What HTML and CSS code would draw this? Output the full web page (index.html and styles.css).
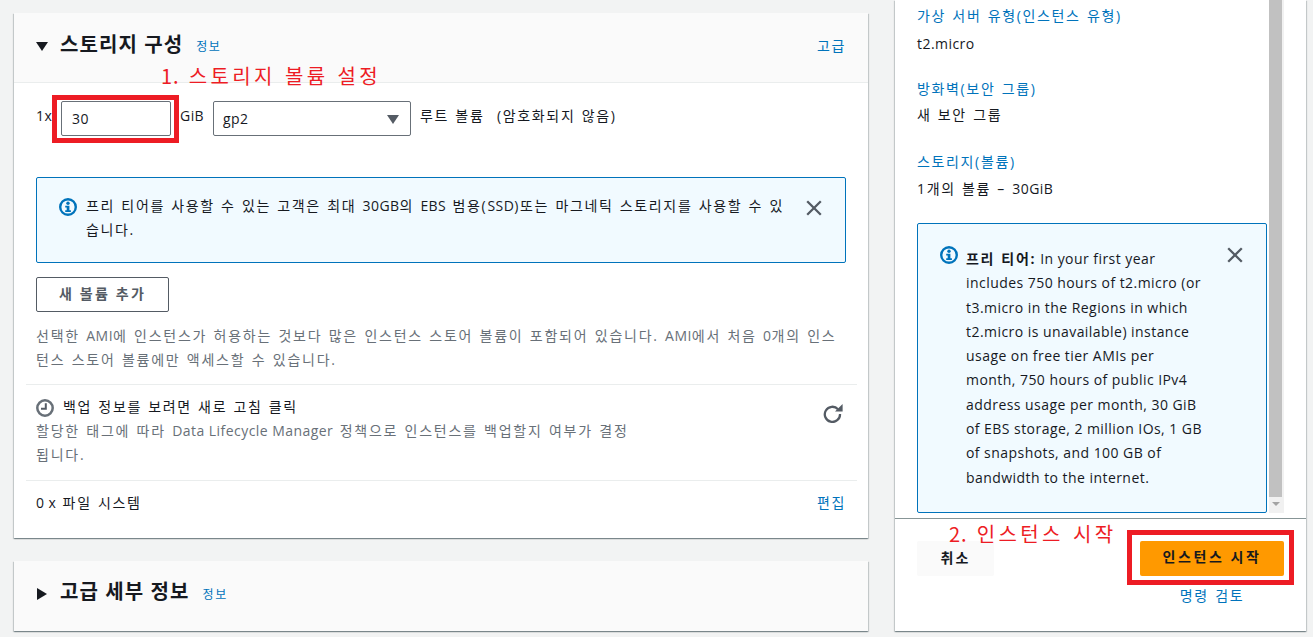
FILE: index.html
```html
<!DOCTYPE html>
<html lang="ko">
<head>
<meta charset="utf-8">
<title>인스턴스 시작</title>
<link rel="stylesheet" href="styles.css">
</head>
<body>
<div class="page">
  <main class="left">
    <section class="card storage">
      <header class="card-head">
        <span class="tri-down"></span>
        <h2>스토리지 구성</h2>
        <a class="info">정보</a>
        <a class="link head-link">고급</a>
      </header>
      <div class="vol-row">
        <span class="lbl lbl-1x en">1x</span>
        <span class="field size-field en">30</span>
        <span class="lbl lbl-gib en">GiB</span>
        <span class="field type-field"><span class="en">gp2</span><span class="caret"></span></span>
        <span class="lbl root">루트 볼륨&nbsp; (암호화되지 않음)</span>
      </div>
      <div class="alert wide-alert">
        <svg class="info-icon" viewBox="0 0 18 18"><circle cx="9" cy="9" r="7.8" fill="none" stroke="#0073bb" stroke-width="2.4"/><circle cx="9" cy="5.3" r="1.7" fill="#0073bb"/><path d="M6.2 7.8h4.2v4.5h1.5v1.8H6.2v-1.8h1.5V9.6H6.2z" fill="#0073bb"/></svg>
        <p>프리 티어를 사용할 수 있는 고객은 최대 <span class="en">30GB</span>의 <span class="en">EBS</span> 범용(<span class="en">SSD</span>)또는 마그네틱 스토리지를 사용할 수 있습니다.</p>
        <svg class="close-icon" viewBox="0 0 16 16"><path d="M1.2 1.2l13.6 13.6M14.8 1.2L1.2 14.8" fill="none" stroke="#545b64" stroke-width="2.3"/></svg>
      </div>
      <button class="btn-outline">새 볼륨 추가</button>
      <p class="muted note">선택한 <span class="en">AMI</span>에 인스턴스가 허용하는 것보다 많은 인스턴스 스토어 볼륨이 포함되어 있습니다. <span class="en">AMI</span>에서 처음 <span class="en">0</span>개의 인스턴스 스토어 볼륨에만 액세스할 수 있습니다.</p>
      <div class="backup">
        <div class="backup-text">
          <div class="backup-title">
            <svg class="clock" viewBox="0 0 18 18"><circle cx="9" cy="9" r="7.7" fill="none" stroke="#687078" stroke-width="2.5"/><path d="M9.8 4.2v5.6H5" fill="none" stroke="#545b64" stroke-width="2"/></svg>
            <span>백업 정보를 보려면 새로 고침 클릭</span>
          </div>
          <p class="muted">할당한 태그에 따라 <span class="en">Data Lifecycle Manager</span> 정책으로 인스턴스를 백업할지 여부가 결정됩니다.</p>
        </div>
        <svg class="refresh" viewBox="0 0 20 20"><path d="M15 6.2A7.6 7.6 0 1 0 17 11" fill="none" stroke="#545b64" stroke-width="2.3"/><path d="M12 8.6h7.6V1z" fill="#545b64"/></svg>
      </div>
      <div class="fs-row">
        <span><span class="en">0 x</span> 파일 시스템</span>
        <a class="link">편집</a>
      </div>
    </section>
    <section class="card advanced">
      <span class="tri-right"></span>
      <h2>고급 세부 정보</h2>
      <a class="info">정보</a>
    </section>
  </main>
  <aside class="card side">
    <div class="side-scroll">
      <div class="side-body">
        <a class="link side-label label-1">가상 서버 유형(인스턴스 유형)</a>
        <div class="side-value value-1 en">t2.micro</div>
        <a class="link side-label label-2">방화벽(보안 그룹)</a>
        <div class="side-value value-2">새 보안 그룹</div>
        <a class="link side-label label-3">스토리지(볼륨)</a>
        <div class="side-value value-3">1개의 볼륨 – <span class="en">30GiB</span></div>
        <div class="alert side-alert">
          <svg class="info-icon" viewBox="0 0 18 18"><circle cx="9" cy="9" r="7.8" fill="none" stroke="#0073bb" stroke-width="2.4"/><circle cx="9" cy="5.3" r="1.7" fill="#0073bb"/><path d="M6.2 7.8h4.2v4.5h1.5v1.8H6.2v-1.8h1.5V9.6H6.2z" fill="#0073bb"/></svg>
          <p class="en"><strong>프리 티어:</strong> In your first year includes 750 hours of t2.micro (or t3.micro in the Regions in which t2.micro is unavailable) instance usage on free tier AMIs per month, 750 hours of public IPv4 address usage per month, 30 GiB of EBS storage, 2 million IOs, 1 GB of snapshots, and 100 GB of bandwidth to the internet.</p>
          <svg class="close-icon" viewBox="0 0 16 16"><path d="M1.2 1.2l13.6 13.6M14.8 1.2L1.2 14.8" fill="none" stroke="#545b64" stroke-width="2.3"/></svg>
        </div>
      </div>
      <div class="scrollbar"><div class="thumb"></div><span class="arrow"></span></div>
    </div>
    <footer class="side-foot">
      <button class="btn-cancel">취소</button>
      <div class="launch">
        <button class="btn-primary">인스턴스 시작</button>
        <a class="link review">명령 검토</a>
      </div>
    </footer>
  </aside>
</div>
<div class="anno anno-1"><span class="anno-num">1.</span> 스토리지 볼륨 설정</div>
<div class="anno anno-2"><span class="anno-num">2.</span> 인스턴스 시작</div>
<div class="redbox box-1"></div>
<div class="redbox box-2"></div>
</body>
</html>
```

FILE: styles.css
```css
* { box-sizing: border-box; }
html, body { margin: 0; height: 100%; overflow: hidden; }
body {
  background: #f2f3f3;
  color: #16191f;
  font-family: "Open Sans", "Noto Sans CJK KR", sans-serif;
  font-size: 14px;
  line-height: 22px;
  letter-spacing: 1.65px;
  word-spacing: 1px;
}
p { margin: 0; }
a { text-decoration: none; }
.en { letter-spacing: .45px; word-spacing: 0; }
.page { display: flex; align-items: flex-start; gap: 27px; padding-left: 14px; }
.left { width: 854px; padding-top: 13px; }
.card {
  background: #fff;
  box-shadow: 0 1px 1px 0 rgba(0,28,36,.3), 1px 1px 1px 0 rgba(0,28,36,.15), -1px 1px 1px 0 rgba(0,28,36,.15);
}
.card-head {
  display: flex; align-items: center; height: 70px; padding: 0 22px 3px;
  background: #fafafa; border-bottom: 1px solid #eaeded;
}
h2 { margin: 0 0 2px; font-size: 20px; font-weight: 700; line-height: 24px; letter-spacing: 1.1px; word-spacing: 0; }
.tri-down { width: 0; height: 0; margin-right: 12px; border: 6px solid transparent; border-top: 9px solid #16191f; border-bottom: 0; }
.tri-right { width: 0; height: 0; margin-right: 13px; border: 6px solid transparent; border-left: 10px solid #16191f; border-right: 0; }
.info { margin: 2px 0 0 13px; font-size: 12px; color: #0073bb; line-height: 20px; letter-spacing: 1.5px; }
.link { color: #0073bb; }
.head-link { margin-left: auto; }
.storage { height: 525px; }
.vol-row { display: flex; align-items: flex-start; padding: 18px 22px 0; height: 94px; }
.lbl { line-height: 30px; white-space: nowrap; }
.lbl-1x { width: 25px; }
.lbl-gib { margin-left: 9px; width: 33px; }
.field { display: flex; align-items: center; height: 35px; border: 1px solid #687078; border-radius: 2px; padding-left: 10px; background: #fff; }
.size-field { width: 110px; }
.type-field { position: relative; width: 198px; padding-left: 9px; }
.caret { position: absolute; right: 11px; top: 13px; width: 0; height: 0; border: 6px solid transparent; border-top: 9px solid #545b64; border-bottom: 0; }
.root { margin-left: 9px; }
.alert { background: #f1faff; border: 1px solid #0073bb; border-radius: 2px; display: flex; }
.wide-alert { margin: 0 22px; height: 86px; padding: 16px 22px 0 22px; }
.wide-alert .info-icon { margin-top: 4px; margin-right: 9px; }
.wide-alert p { flex: none; width: 704px; line-height: 24px; }
.wide-alert .close-icon { margin: 6px 0 0 16px; }
.info-icon { flex: none; width: 18px; height: 18px; }
.close-icon { flex: none; width: 16px; height: 16px; }
.btn-outline {
  display: block; margin: 14px 0 0 22px; width: 133px; height: 35px; padding: 0 0 3px; background: #fff;
  border: 1px solid #545b64; border-radius: 2px; color: #545b64; letter-spacing: 2.2px;
  font: 700 14px "Open Sans", "Noto Sans CJK KR", sans-serif;
}
.muted { color: #687078; letter-spacing: 1.75px; }
.note { margin: 12px 22px 0; line-height: 24px; width: 806px; }
.backup { display: flex; justify-content: space-between; margin: 12px 11px 0 12px; padding: 10px 14px 0 10px; border-top: 1px solid #eaeded; border-bottom: 1px solid #eaeded; height: 97px; }
.backup-text { width: 600px; }
.backup-title { display: flex; align-items: center; gap: 9px; height: 24px; }
.backup-text .muted { line-height: 24px; }
.clock { width: 18px; height: 18px; margin-top: 2px; }
.refresh { width: 20px; height: 20px; margin-top: 8px; }
.fs-row { display: flex; justify-content: space-between; padding: 11px 22px 0; }
.advanced { display: flex; align-items: center; height: 70px; margin-top: 23px; padding: 0 22px 4px 23px; background: #fafafa; }
.advanced h2 { margin-bottom: 4px; }
.side { width: 411px; height: 631px; display: flex; flex-direction: column; }
.side-scroll { display: flex; height: 519px; border-bottom: 1px solid #879596; flex: none; }
.side-body { width: 372px; padding-left: 22px; margin-right: 2px; }
.side-label { display: block; line-height: 22px; }
.side-value { line-height: 22px; }
.label-1 { margin-top: 5px; }
.value-1 { margin-top: 6px; }
.label-2 { margin-top: 23px; }
.value-2 { margin-top: 4px; }
.label-3 { margin-top: 25px; }
.value-3 { margin-top: 5px; }
.side-alert { margin-top: 23px; width: 350px; height: 290px; padding: 19px 0 0 22px; }
.side-alert .info-icon { margin-top: 3px; margin-right: 8px; }
.side-alert p { flex: none; width: 241px; line-height: 24.3px; margin-top: 4px; }
.side-alert strong { font-weight: 700; letter-spacing: 1.65px; word-spacing: 1px; }
.side-alert .close-icon { margin: 4px 0 0 20px; }
.scrollbar { width: 15px; background: #f1f1f1; height: 513px; display: flex; flex-direction: column; }
.thumb { width: 13px; height: 497px; background: #c1c1c1; }
.arrow { width: 0; height: 0; margin: 5px 0 0 3px; border: 4px solid transparent; border-top: 4px solid #a3a3a3; border-bottom: 0; }
.side-foot { display: flex; justify-content: space-between; padding: 22px 22px 0; }
.btn-cancel { width: 77px; height: 35px; padding: 0 0 3px; background: #fafafa; border: 0; border-radius: 2px; color: #16191f; letter-spacing: 2.2px; font: 700 14px "Open Sans", "Noto Sans CJK KR", sans-serif; }
.launch { display: flex; flex-direction: column; align-items: center; }
.btn-primary { width: 144px; height: 35px; padding: 0 0 5px; background: #ff9900; border: 0; border-radius: 2px; color: #16191f; letter-spacing: 2.6px; font: 700 14px "Open Sans", "Noto Sans CJK KR", sans-serif; }
.review { margin-top: 9px; line-height: 22px; }
.anno { position: absolute; color: #ed1c24; font-family: "Noto Sans CJK KR", sans-serif; font-size: 20px; line-height: 24px; letter-spacing: 3.4px; word-spacing: 0; white-space: nowrap; }
.anno-num { letter-spacing: 1px; }
.anno-1 { left: 161px; top: 64px; }
.anno-2 { left: 949px; top: 522px; }
.redbox { position: absolute; border: 5px solid #ed1c24; }
.box-1 { left: 52px; top: 95px; width: 127px; height: 48px; }
.box-2 { left: 1127px; top: 530px; width: 167px; height: 55px; }
```
